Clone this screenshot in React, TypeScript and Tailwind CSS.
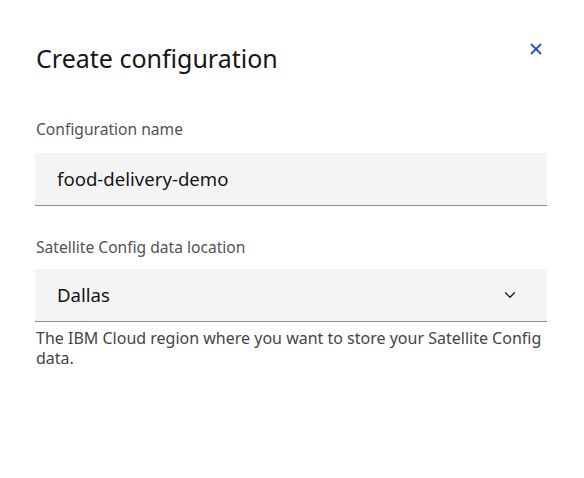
import { ChevronDown } from "lucide-react";

export default function App() {
    return (
        <div className="w-[584px] h-[478px] bg-white text-[#161616] font-['Noto_Sans',sans-serif] pl-[35px] pr-[37px] pt-[38px]">
            {/* Header */}
            <div className="flex items-start justify-between">
                <h2 className="text-[25px] leading-[40px] pl-px">Create configuration</h2>
                <button className="mt-[4px] mr-[4px] w-[14px] h-[14px] flex items-center justify-center text-[#2454c4]">
                    <svg viewBox="0 0 12 12" width="12" height="12" fill="none" stroke="currentColor" strokeWidth="1.8">
                        <path d="M1 1L11 11M11 1L1 11" />
                    </svg>
                </button>
            </div>

            {/* Configuration name */}
            <div className="mt-[41px]">
                <label className="block text-[15.6px] leading-[20px] text-[#525252] pl-px">Configuration name</label>
                <div className="mt-[14px] h-[53px] bg-[#f4f4f4] border-b border-[#8d8d8d] flex items-center pl-[22px] text-[18.6px]">
                    food-delivery-demo
                </div>
            </div>

            {/* Data location */}
            <div className="mt-[31px]">
                <label className="block text-[15.6px] leading-[20px] text-[#525252] pl-px">Satellite Config data location</label>
                <div className="mt-[12px] h-[53px] bg-[#f4f4f4] border-b border-[#8d8d8d] flex items-center justify-between pl-[22px] pr-[28px] text-[18.6px]">
                    <span>Dallas</span>
                    <ChevronDown size={18} strokeWidth={1.6} className="text-[#161616]" />
                </div>
                <p className="mt-[6px] text-[16px] leading-[20px] text-[#454545] pl-px">
                    The IBM Cloud region where you want to store your Satellite Config data.
                </p>
            </div>
        </div>
    );
}
